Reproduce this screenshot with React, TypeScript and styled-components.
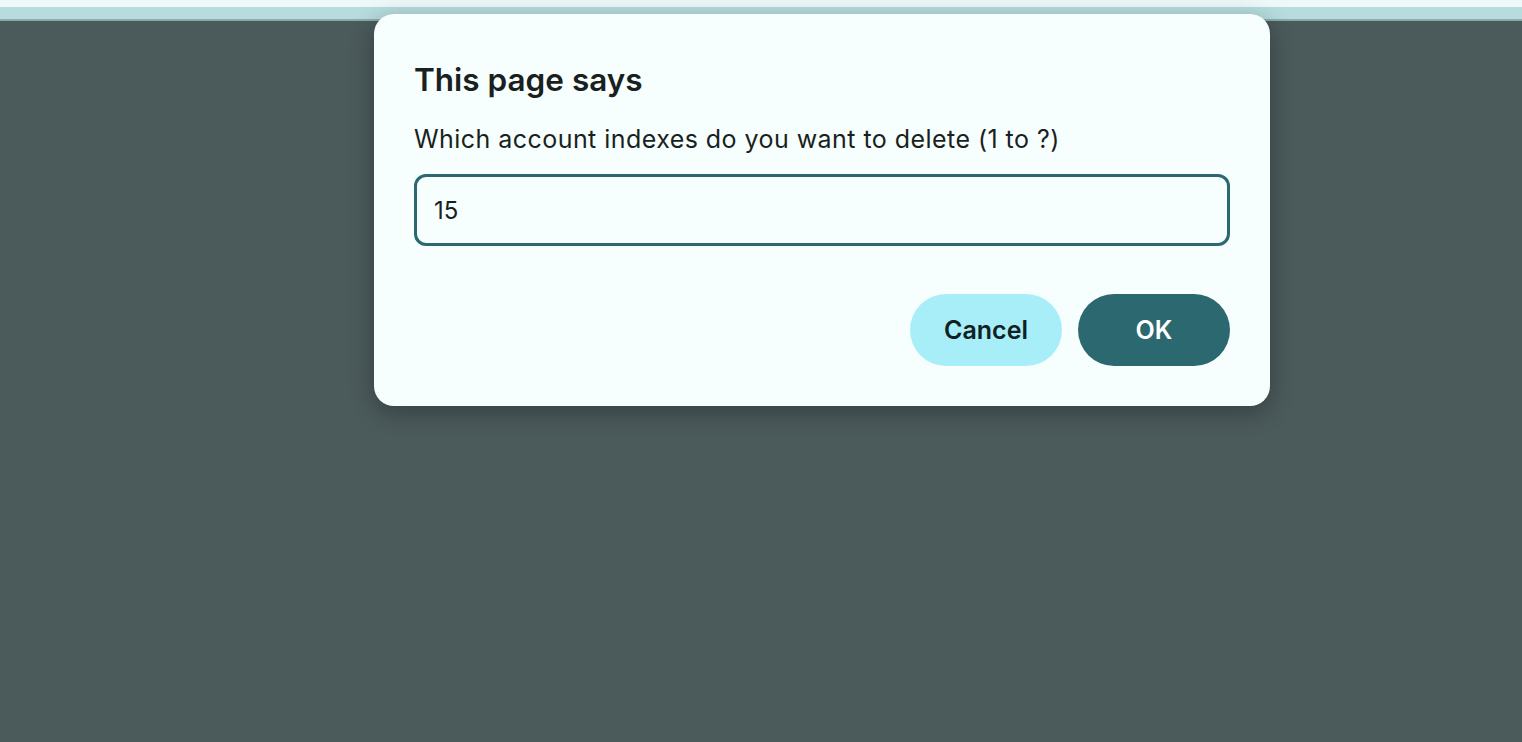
import * as React from "react";
import styled, { createGlobalStyle } from "styled-components";

const GlobalStyle = createGlobalStyle`
  html, body {
    margin: 0;
    padding: 0;
    height: 100%;
    background: #4b5a5b;
    font-family: Inter, "Noto Sans", sans-serif;
  }
`;

export default function App() {
  return (
    <>
      <GlobalStyle />
      <Page>
        <TopStrip />
        <TealStrip />
        <Overlay>
          <Dialog>
            <Title>This page says</Title>
            <Message>Which account indexes do you want to delete (1 to ?)</Message>
            <Input defaultValue="15" />
            <Actions>
              <Button>Cancel</Button>
              <Button $primary>OK</Button>
            </Actions>
          </Dialog>
        </Overlay>
      </Page>
    </>
  );
}

const Page = styled.div`
  height: 742px;
  display: flex;
  flex-direction: column;
  position: relative;
  overflow: hidden;
`;

const TopStrip = styled.div`
  height: 7px;
  background: #eef8f8;
`;

const TealStrip = styled.div`
  height: 12px;
  background: #b6dcdd;
  border-bottom: 2px solid #8eaaab;
`;

const Overlay = styled.div`
  flex: 1;
  background: #4b5a5b;
`;

/* the dialog floats over the dimmed page */
const Dialog = styled.div`
  position: absolute;
  top: 14px;
  left: 374px;
  width: 896px;
  box-sizing: border-box;
  padding: 40px;
  background: #f6fefe;
  border-radius: 20px;
  box-shadow: 0 6px 24px rgba(0, 0, 0, 0.3);
  display: flex;
  flex-direction: column;
`;

const Title = styled.h1`
  margin: 6px 0 0 0;
  font-size: 31.5px;
  font-weight: 600;
  line-height: 40px;
  color: #1a1f20;
`;

const Message = styled.p`
  margin: 22px 0 0 0;
  font-size: 25px;
  letter-spacing: 0.45px;
  line-height: 34px;
  color: #1a1f20;
`;

const Input = styled.input`
  margin-top: 18px;
  height: 72px;
  box-sizing: border-box;
  border: 3px solid #2c6870;
  border-radius: 12px;
  background: #f6fefe;
  padding: 0 17px;
  font-family: inherit;
  font-size: 24px;
  color: #1a1f20;
  outline: none;
`;

const Actions = styled.div`
  margin-top: 48px;
  display: flex;
  justify-content: flex-end;
  gap: 16px;
`;

const Button = styled.button<{ $primary?: boolean }>`
  width: 152px;
  height: 72px;
  padding: 0;
  border: none;
  border-radius: 36px;
  font-family: inherit;
  font-size: 25px;
  font-weight: 600;
  background: ${(p) => (p.$primary ? "#2c6870" : "#a8eef9")};
  color: ${(p) => (p.$primary ? "#ffffff" : "#0f2124")};
  cursor: pointer;
`;
